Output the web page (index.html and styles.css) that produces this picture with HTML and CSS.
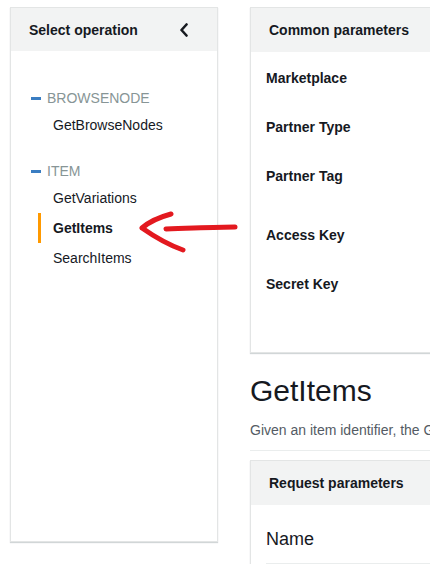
FILE: index.html
```html
<!DOCTYPE html>
<html lang="en">
<head>
  <meta charset="UTF-8">
  <title>Scratchpad - GetItems</title>
  <link rel="stylesheet" href="styles.css">
</head>
<body>
  <div class="pagina">
    <aside class="panel lateral">
      <div class="panel-cabecera">
        <span>Select operation</span>
        <svg class="chevron" width="10" height="14" viewBox="0 0 10 14">
          <path d="M7.5 1.5 L2.5 7 L7.5 12.5" fill="none" stroke="#16191f" stroke-width="2.6" stroke-linecap="round" stroke-linejoin="round"/>
        </svg>
      </div>
      <div class="lateral-cuerpo">
        <div class="grupo">
          <div class="grupo-titulo"><span class="guion"></span>BROWSENODE</div>
          <a class="operacion">GetBrowseNodes</a>
        </div>
        <div class="grupo">
          <div class="grupo-titulo"><span class="guion"></span>ITEM</div>
          <a class="operacion">GetVariations</a>
          <a class="operacion activa">GetItems</a>
          <a class="operacion">SearchItems</a>
        </div>
      </div>
    </aside>

    <main class="contenido">
      <section class="panel">
        <div class="panel-cabecera">Common parameters</div>
        <div class="parametros">
          <div class="fila">Marketplace</div>
          <div class="fila">Partner Type</div>
          <div class="fila alta">Partner Tag</div>
          <div class="fila">Access Key</div>
          <div class="fila">Secret Key</div>
        </div>
      </section>

      <h1>GetItems</h1>
      <p class="descripcion">Given an item identifier, the GetItems operation returns the item attributes, based on the resources specified in the request.</p>
      <hr class="separador">

      <section class="panel">
        <div class="panel-cabecera">Request parameters</div>
        <div class="tabla">
          <div class="tabla-titulo">Name</div>
        </div>
      </section>
    </main>

    <!-- flecha roja dibujada a mano encima de la captura -->
    <svg class="flecha" width="110" height="50" viewBox="0 0 110 50">
      <path d="M97 16 C80 16 60 17 28 18" fill="none" stroke="#e3191f" stroke-width="5" stroke-linecap="round"/>
      <path d="M33 3 C22 6 12 10 4 17 C14 24 28 33 45 39" fill="none" stroke="#e3191f" stroke-width="5" stroke-linecap="round" stroke-linejoin="round"/>
    </svg>
  </div>
</body>
</html>
```

FILE: styles.css
```css
body {
  margin: 0;
  font-family: "Liberation Sans", Arial, sans-serif;
  color: #16191f;
  background: #fff;
  overflow: hidden;
}

.pagina {
  position: relative;
  display: flex;
  gap: 32px;
  padding: 7px 0 0 10px;
  width: 900px;
}

.panel {
  background: #fff;
  border: 1px solid #e3e5e5;
  box-shadow: 0 1px 1px rgba(0,28,36,0.18);
}

.panel-cabecera {
  height: 43px;
  display: flex;
  align-items: center;
  justify-content: space-between;
  padding: 0 18px;
  background: #f2f3f3;
  font-size: 14px;
  font-weight: bold;
}

.lateral {
  width: 206px;
  height: 533px;
  flex-shrink: 0;
}

.lateral .panel-cabecera {
  padding: 0 28px 0 18px;
}

.chevron {
  display: block;
}

.lateral-cuerpo {
  padding-top: 37px;
}

.grupo {
  margin-bottom: 21px;
}

.grupo-titulo {
  display: flex;
  align-items: center;
  height: 20px;
  margin-bottom: 2px;
  padding-left: 20px;
  font-size: 14px;
  color: #879596;
}

.guion {
  width: 10px;
  height: 3px;
  margin-right: 6px;
  background: #3a7dc2;
}

.operacion {
  display: flex;
  align-items: center;
  height: 30px;
  padding-left: 42px;
  font-size: 14px;
  color: #16191f;
}

.operacion.activa {
  font-weight: bold;
  border-left: 3px solid #ff9900;
  margin-left: 27px;
  padding-left: 12px;
}

.contenido {
  flex: 1;
}

.contenido .panel-cabecera {
  height: 44px;
}

.parametros {
  padding: 16px 15px 29px;
}

.fila {
  height: 49px;
  line-height: 20px;
  font-size: 14px;
  font-weight: bold;
}

.fila.alta {
  height: 59px;
}

h1 {
  margin: 20px 0 0;
  font-size: 30px;
  line-height: 36px;
  font-weight: normal;
}

.descripcion {
  margin: 11px 0 0;
  font-size: 14px;
  line-height: 20px;
  color: #545b64;
  white-space: nowrap;
}

.separador {
  margin: 10px 0 9px;
  border: none;
  border-top: 1px solid #eaeded;
}

.tabla {
  padding: 22px 15px 0;
}

.tabla-titulo {
  font-size: 18px;
  line-height: 24px;
  padding-bottom: 12px;
  border-bottom: 1px solid #eaeded;
}

.flecha {
  position: absolute;
  left: 138px;
  top: 211px;
}
```
